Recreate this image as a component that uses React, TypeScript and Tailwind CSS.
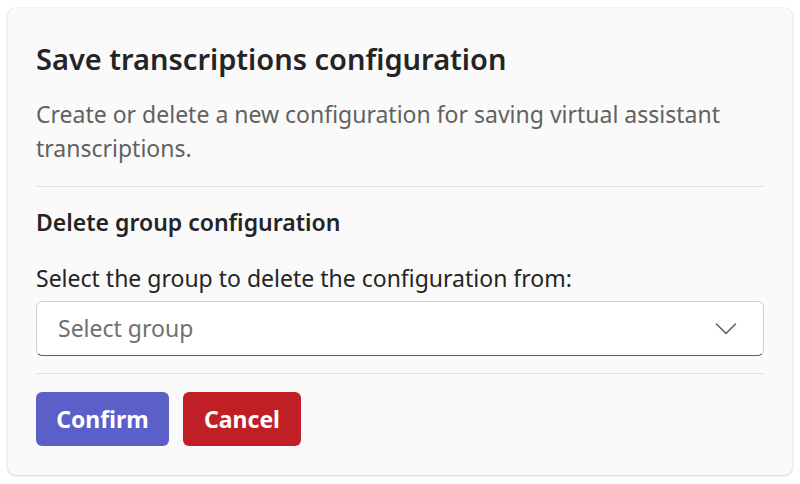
import { useState } from "react";

const font = { fontFamily: '"Noto Sans", "Open Sans", Arial, sans-serif' };

function Chevron() {
  return (
    <svg width="22" height="14" viewBox="0 0 22 14" fill="none" className="shrink-0">
      <path d="M1.5 2l9.5 9.5L20.5 2" stroke="#616161" strokeWidth="1.6" strokeLinecap="round" strokeLinejoin="round" />
    </svg>
  );
}

export default function App() {
  const [group] = useState<string | null>(null);

  return (
    <div className="min-h-[484px] bg-white p-2" style={font}>
      <div className="rounded-lg bg-[#fafafa] px-7 pt-[31px] pb-[29px] shadow-[0_0_2px_rgba(0,0,0,0.12),0_1px_3px_rgba(0,0,0,0.14)]">
        <h1 className="text-[29px] font-semibold leading-[40px] text-[#242424]">
          Save transcriptions configuration
        </h1>
        <p className="mt-[18px] text-[23px] leading-[34px] text-[#616161]">
          Create or delete a new configuration for saving virtual assistant transcriptions.
        </p>
        <div className="mt-[21px] h-px bg-[#e0e0e0]" />

        <h2 className="mt-[19px] text-[23px] font-semibold leading-[32px] text-[#242424]">
          Delete group configuration
        </h2>
        <label className="mt-[24px] block text-[23px] leading-[32px] text-[#242424]">
          Select the group to delete the configuration from:
        </label>
        <button
          type="button"
          className="mt-[7px] flex h-[55px] w-full items-center justify-between rounded-md border border-[#d1d1d1] border-b-[#616161] bg-white pl-[21px] pr-[26px] text-left"
        >
          <span className="text-[23px] text-[#707070]">{group ?? "Select group"}</span>
          <Chevron />
        </button>
        <div className="mt-[17px] h-px bg-[#e0e0e0]" />

        <div className="mt-[18px] flex gap-[14px]">
          <button
            type="button"
            className="h-[54px] w-[133px] rounded-md bg-[#5b5fc7] text-[23px] font-bold text-white"
          >
            Confirm
          </button>
          <button
            type="button"
            className="h-[54px] w-[118px] rounded-md bg-[#c11f26] text-[23px] font-bold text-white"
          >
            Cancel
          </button>
        </div>
      </div>
    </div>
  );
}
